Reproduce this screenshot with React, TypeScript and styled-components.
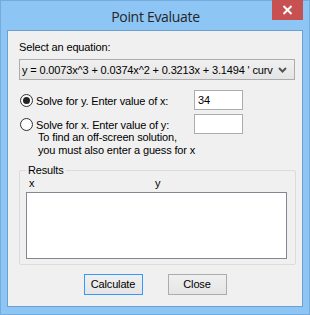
import React from 'react'
import styled, { createGlobalStyle, css } from 'styled-components'

const GlobalStyle = createGlobalStyle`
  html, body {
    margin: 0;
    padding: 0;
  }
  body {
    font-family: "Liberation Sans", Arial, sans-serif;
  }
`

const App = () => {
  return (
    <>
      <GlobalStyle />
      <StyledWindow>
        <StyledTitleBar>
          <span>Point Evaluate</span>
          <StyledCloseButton>
            <svg width="11" height="10" viewBox="0 0 11 10">
              <path d="M1.5 1 L9.5 9 M9.5 1 L1.5 9" stroke="#fff" strokeWidth="2" />
            </svg>
          </StyledCloseButton>
        </StyledTitleBar>
        <StyledClient>
          <StyledFieldLabel>Select an equation:</StyledFieldLabel>
          <StyledCombo>
            <span>y = 0.0073x^3 + 0.0374x^2 + 0.3213x + 3.1494 ' curv</span>
            <svg width="9" height="6" viewBox="0 0 9 6">
              <path d="M1 1 L4.5 4.5 L8 1" stroke="#555" strokeWidth="2" fill="none" />
            </svg>
          </StyledCombo>
          <StyledOptionRow $top={10}>
            <StyledRadio $checked />
            <StyledOptionLabel>Solve for y. Enter value of x:</StyledOptionLabel>
            <StyledTextBox>34</StyledTextBox>
          </StyledOptionRow>
          <StyledOptionRow $top={4}>
            <StyledRadio />
            <StyledOptionLabel>Solve for x. Enter value of y:</StyledOptionLabel>
            <StyledTextBox />
          </StyledOptionRow>
          <StyledHint>
            To find an off-screen solution,
            <br />
            you must also enter a guess for x
          </StyledHint>
          <StyledGroup>
            <legend>Results</legend>
            <StyledColumns>
              <span>x</span>
              <span>y</span>
            </StyledColumns>
            <StyledListBox />
          </StyledGroup>
          <StyledButtonRow>
            <StyledButton $focused>Calculate</StyledButton>
            <StyledButton>Close</StyledButton>
          </StyledButtonRow>
        </StyledClient>
      </StyledWindow>
    </>
  )
}

export default App

const StyledWindow = styled.div`
  position: relative;
  box-sizing: border-box;
  width: 310px;
  height: 315px;
  display: flex;
  flex-direction: column;
  padding: 0 6px 7px 6px;
  background: #8dc5f5;
  border: 1px solid #76abdd;
  font-size: 11px;
  letter-spacing: -0.15px;
  color: #000;
`

const StyledTitleBar = styled.div`
  height: 29px;
  display: flex;
  align-items: center;
  justify-content: center;

  & span {
    font-family: "Open Sans", sans-serif;
    font-size: 14px;
    letter-spacing: -0.3px;
    color: #262626;
    margin-top: 1px;
    margin-left: 1px;
  }
`

const StyledCloseButton = styled.div`
  position: absolute;
  top: -1px;
  right: 6px;
  width: 31px;
  height: 20px;
  background: #c75050;
  display: flex;
  align-items: center;
  justify-content: center;
`

const StyledClient = styled.div`
  flex: 1;
  display: flex;
  flex-direction: column;
  background: #f0f0f0;
  border: 1px solid #6f9fcf;
  padding: 10px 7px 0 11px;
`

const StyledFieldLabel = styled.div`
  line-height: 13px;
`

const StyledCombo = styled.div`
  box-sizing: border-box;
  margin-top: 5px;
  width: 276px;
  height: 21px;
  display: flex;
  align-items: center;
  justify-content: space-between;
  padding: 0 7px 0 2px;
  border: 1px solid #acacac;
  background: linear-gradient(#f0f0f0, #e5e5e5);
  white-space: nowrap;
  overflow: hidden;

  & svg {
    flex-shrink: 0;
  }
`

const StyledOptionRow = styled.div<{ $top: number }>`
  margin-top: ${(p) => p.$top}px;
  height: 20px;
  display: flex;
  align-items: center;
`

const StyledRadio = styled.span<{ $checked?: boolean }>`
  box-sizing: border-box;
  width: 13px;
  height: 13px;
  margin: 1px 3px 0 1px;
  border-radius: 50%;
  border: 1px solid #333;
  background: radial-gradient(circle, #ffffff 40%, #f0f0f0 100%);
  display: flex;
  align-items: center;
  justify-content: center;

  ${(p) =>
    p.$checked &&
    css`
      &::after {
        content: '';
        width: 7px;
        height: 7px;
        border-radius: 50%;
        background: #222;
      }
    `}
`

const StyledOptionLabel = styled.span`
  width: 158px;
  line-height: 13px;
  margin-top: 2px;
`

const StyledTextBox = styled.div`
  box-sizing: border-box;
  width: 49px;
  height: 20px;
  border: 1px solid #acacac;
  background: #fff;
  padding: 2px 0 0 3px;
  line-height: 14px;
`

const StyledHint = styled.div`
  margin: -3px 0 0 19px;
  line-height: 13px;
`

const StyledGroup = styled.fieldset`
  margin: 7px 0 0 0;
  width: 277px;
  box-sizing: border-box;
  padding: 0 6px 5px 6px;
  border: 1px solid #dcdcdc;
  border-radius: 2px;
  min-inline-size: 0;

  & legend {
    padding: 0 2px;
    line-height: 13px;
  }
`

const StyledColumns = styled.div`
  display: grid;
  grid-template-columns: 126px 1fr;
  padding-left: 3px;
  line-height: 13px;
`

const StyledListBox = styled.div`
  box-sizing: border-box;
  margin-top: 2px;
  width: 261px;
  height: 67px;
  border: 1px solid #828790;
  background: #fff;
`

const StyledButtonRow = styled.div`
  margin-top: 9px;
  display: flex;
  justify-content: center;
  gap: 25px;
  padding-right: 4px;
`

const StyledButton = styled.div<{ $focused?: boolean }>`
  box-sizing: border-box;
  width: 59px;
  height: 21px;
  display: flex;
  align-items: center;
  justify-content: center;
  border: 1px solid ${(p) => (p.$focused ? '#3399ff' : '#acacac')};
  background: linear-gradient(#f0f0f0, #e5e5e5);
  line-height: 13px;
`
